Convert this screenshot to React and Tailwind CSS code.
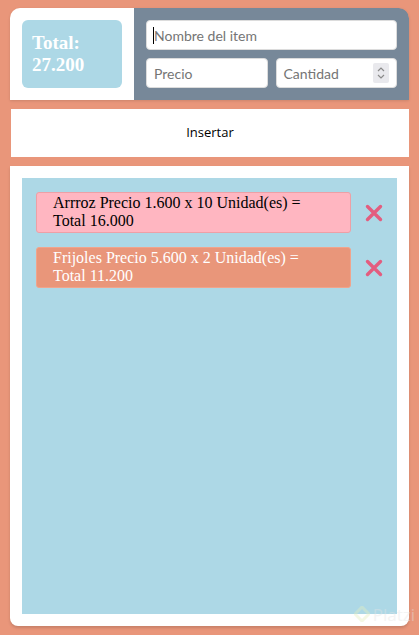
import React from "react";

function XIcon() {
  return (
    <svg width="18" height="18" viewBox="0 0 18 18" className="shrink-0">
      <path d="M2.5 2.5 L15.5 15.5 M15.5 2.5 L2.5 15.5" stroke="#e35d7f" strokeWidth="3.4" strokeLinecap="round" />
    </svg>
  );
}

function Item({ text1, text2, variant }) {
  const cls =
    variant === "pink"
      ? "bg-[#ffb6c1] border-[#eda0a6] text-black"
      : "bg-[#e9967a] border-[#f0a48c] text-white";
  return (
    <div className="flex items-center">
      <div className={`w-[316px] h-[41px] rounded-[3px] border pl-[16px] py-px text-[16px] leading-[18px] ${cls}`} style={{ fontFamily: '"Liberation Serif", serif' }}>
        <div>{text1}</div>
        <div>{text2}</div>
      </div>
      <div className="ml-[14px]">
        <XIcon />
      </div>
    </div>
  );
}

const inputFont = { fontFamily: 'Lato, "Open Sans", sans-serif' };

export default function App() {
  return (
    <div className="relative min-h-[635px] bg-[#e9967a] px-[10px] pt-[8px]" style={{ fontFamily: '"Open Sans", "Noto Sans", sans-serif' }}>
      {/* top card */}
      <div className="flex h-[92px] rounded-t-[10px] overflow-hidden shadow-[0_1px_3px_rgba(0,0,0,0.12)]">
        <div className="w-[124px] bg-white p-[12px]">
          <div
            className="h-[68px] rounded-[6px] bg-[#add8e6] pl-[10px] pt-[12px] text-white font-bold text-[19px] leading-[22px]"
            style={{ fontFamily: '"Liberation Serif", serif' }}
          >
            <div>Total:</div>
            <div>27.200</div>
          </div>
        </div>
        <div className="flex-1 bg-[#778899] p-[12px] flex flex-col gap-[8px] rounded-tr-[10px]" style={inputFont}>
          <div className="relative h-[30px] rounded-[4px] bg-white border border-[#dcdcdc] flex items-center pl-[7px]">
            <span className="absolute left-[6px] top-[6px] w-px h-[17px] bg-black" />
            <span className="text-[14px] text-[#757575]">Nombre del item</span>
          </div>
          <div className="flex gap-[8px]">
            <div className="flex-1 h-[30px] rounded-[4px] bg-white border border-[#dcdcdc] flex items-center pl-[7px]">
              <span className="text-[14px] text-[#757575]">Precio</span>
            </div>
            <div className="relative flex-1 h-[30px] rounded-[4px] bg-white border border-[#dcdcdc] flex items-center pl-[7px]">
              <span className="text-[14px] text-[#757575]">Cantidad</span>
              <div className="absolute right-[7px] top-[4px] w-[16px] h-[20px] bg-[#e9e9ed] rounded-[2px] flex flex-col items-center justify-center">
                <svg width="10" height="16" viewBox="0 0 10 16">
                  <path d="M2 6 L5 3 L8 6 M2 10 L5 13 L8 10" stroke="#8a8a8a" strokeWidth="1.2" fill="none" />
                </svg>
              </div>
            </div>
          </div>
        </div>
      </div>

      {/* button */}
      <div className="mt-[9px] h-[48px] bg-white flex items-center justify-center text-[13px] text-black border-l border-[#e9967a]">
        Insertar
      </div>

      {/* list */}
      <div className="mt-[9px] h-[460px] bg-white rounded-b-[8px] p-[12px] shadow-[0_2px_3px_rgba(0,0,0,0.15)]">
        <div className="h-full bg-[#add8e6] px-[14px] pt-[14px] flex flex-col gap-[14px]">
          <Item variant="pink" text1="Arrroz Precio 1.600 x 10 Unidad(es) =" text2="Total 16.000" />
          <Item variant="salmon" text1="Frijoles Precio 5.600 x 2 Unidad(es) =" text2="Total 11.200" />
        </div>
      </div>

      {/* watermark */}
      <div className="absolute right-[4px] bottom-[8px] flex items-center gap-[3px] opacity-40 pointer-events-none">
        <svg width="16" height="16" viewBox="0 0 16 16">
          <path d="M8 1 L15 8 L8 15 L1 8 Z" stroke="#e6f0c0" strokeWidth="3" fill="none" />
        </svg>
        <span className="text-[17px] text-[#e4e4e4]">Platzi</span>
      </div>
    </div>
  );
}
